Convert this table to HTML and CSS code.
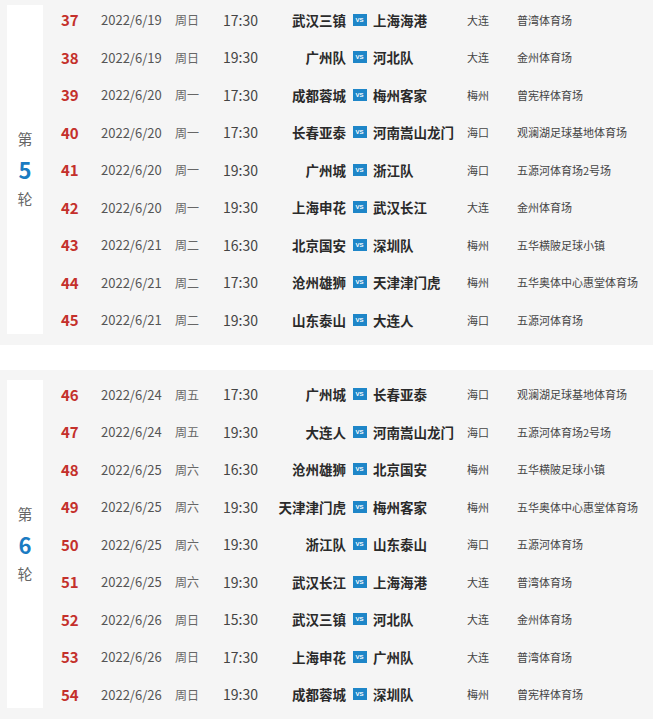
FILE: index.html
```html
<!DOCTYPE html>
<html lang="zh">
<head>
<meta charset="utf-8">
<link rel="stylesheet" href="styles.css">
</head>
<body>
<div class="wrap">
  <section class="panel">
    <div class="round"><span class="di">第</span><span class="rn">5</span><span class="di">轮</span></div>
    <div class="rows">
      <div class="row"><span class="num">37</span><span class="date">2022/6/19</span><span class="wk">周日</span><span class="tm">17:30</span><span class="home">武汉三镇</span><span class="vsc"><span class="vs">VS</span></span><span class="away">上海海港</span><span class="city">大连</span><span class="venue">普湾体育场</span></div>
      <div class="row"><span class="num">38</span><span class="date">2022/6/19</span><span class="wk">周日</span><span class="tm">19:30</span><span class="home">广州队</span><span class="vsc"><span class="vs">VS</span></span><span class="away">河北队</span><span class="city">大连</span><span class="venue">金州体育场</span></div>
      <div class="row"><span class="num">39</span><span class="date">2022/6/20</span><span class="wk">周一</span><span class="tm">17:30</span><span class="home">成都蓉城</span><span class="vsc"><span class="vs">VS</span></span><span class="away">梅州客家</span><span class="city">梅州</span><span class="venue">曾宪梓体育场</span></div>
      <div class="row"><span class="num">40</span><span class="date">2022/6/20</span><span class="wk">周一</span><span class="tm">17:30</span><span class="home">长春亚泰</span><span class="vsc"><span class="vs">VS</span></span><span class="away">河南嵩山龙门</span><span class="city">海口</span><span class="venue">观澜湖足球基地体育场</span></div>
      <div class="row"><span class="num">41</span><span class="date">2022/6/20</span><span class="wk">周一</span><span class="tm">19:30</span><span class="home">广州城</span><span class="vsc"><span class="vs">VS</span></span><span class="away">浙江队</span><span class="city">海口</span><span class="venue">五源河体育场2号场</span></div>
      <div class="row"><span class="num">42</span><span class="date">2022/6/20</span><span class="wk">周一</span><span class="tm">19:30</span><span class="home">上海申花</span><span class="vsc"><span class="vs">VS</span></span><span class="away">武汉长江</span><span class="city">大连</span><span class="venue">金州体育场</span></div>
      <div class="row"><span class="num">43</span><span class="date">2022/6/21</span><span class="wk">周二</span><span class="tm">16:30</span><span class="home">北京国安</span><span class="vsc"><span class="vs">VS</span></span><span class="away">深圳队</span><span class="city">梅州</span><span class="venue">五华横陂足球小镇</span></div>
      <div class="row"><span class="num">44</span><span class="date">2022/6/21</span><span class="wk">周二</span><span class="tm">17:30</span><span class="home">沧州雄狮</span><span class="vsc"><span class="vs">VS</span></span><span class="away">天津津门虎</span><span class="city">梅州</span><span class="venue">五华奥体中心惠堂体育场</span></div>
      <div class="row"><span class="num">45</span><span class="date">2022/6/21</span><span class="wk">周二</span><span class="tm">19:30</span><span class="home">山东泰山</span><span class="vsc"><span class="vs">VS</span></span><span class="away">大连人</span><span class="city">海口</span><span class="venue">五源河体育场</span></div>
    </div>
  </section>
  <section class="panel">
    <div class="round"><span class="di">第</span><span class="rn">6</span><span class="di">轮</span></div>
    <div class="rows">
      <div class="row"><span class="num">46</span><span class="date">2022/6/24</span><span class="wk">周五</span><span class="tm">17:30</span><span class="home">广州城</span><span class="vsc"><span class="vs">VS</span></span><span class="away">长春亚泰</span><span class="city">海口</span><span class="venue">观澜湖足球基地体育场</span></div>
      <div class="row"><span class="num">47</span><span class="date">2022/6/24</span><span class="wk">周五</span><span class="tm">19:30</span><span class="home">大连人</span><span class="vsc"><span class="vs">VS</span></span><span class="away">河南嵩山龙门</span><span class="city">海口</span><span class="venue">五源河体育场2号场</span></div>
      <div class="row"><span class="num">48</span><span class="date">2022/6/25</span><span class="wk">周六</span><span class="tm">16:30</span><span class="home">沧州雄狮</span><span class="vsc"><span class="vs">VS</span></span><span class="away">北京国安</span><span class="city">梅州</span><span class="venue">五华横陂足球小镇</span></div>
      <div class="row"><span class="num">49</span><span class="date">2022/6/25</span><span class="wk">周六</span><span class="tm">19:30</span><span class="home">天津津门虎</span><span class="vsc"><span class="vs">VS</span></span><span class="away">梅州客家</span><span class="city">梅州</span><span class="venue">五华奥体中心惠堂体育场</span></div>
      <div class="row"><span class="num">50</span><span class="date">2022/6/25</span><span class="wk">周六</span><span class="tm">19:30</span><span class="home">浙江队</span><span class="vsc"><span class="vs">VS</span></span><span class="away">山东泰山</span><span class="city">海口</span><span class="venue">五源河体育场</span></div>
      <div class="row"><span class="num">51</span><span class="date">2022/6/25</span><span class="wk">周六</span><span class="tm">19:30</span><span class="home">武汉长江</span><span class="vsc"><span class="vs">VS</span></span><span class="away">上海海港</span><span class="city">大连</span><span class="venue">普湾体育场</span></div>
      <div class="row"><span class="num">52</span><span class="date">2022/6/26</span><span class="wk">周日</span><span class="tm">15:30</span><span class="home">武汉三镇</span><span class="vsc"><span class="vs">VS</span></span><span class="away">河北队</span><span class="city">大连</span><span class="venue">金州体育场</span></div>
      <div class="row"><span class="num">53</span><span class="date">2022/6/26</span><span class="wk">周日</span><span class="tm">17:30</span><span class="home">上海申花</span><span class="vsc"><span class="vs">VS</span></span><span class="away">广州队</span><span class="city">大连</span><span class="venue">普湾体育场</span></div>
      <div class="row"><span class="num">54</span><span class="date">2022/6/26</span><span class="wk">周日</span><span class="tm">19:30</span><span class="home">成都蓉城</span><span class="vsc"><span class="vs">VS</span></span><span class="away">深圳队</span><span class="city">梅州</span><span class="venue">曾宪梓体育场</span></div>
    </div>
  </section>
</div>
</body>
</html>
```

FILE: styles.css
```css
html, body {
  margin: 0;
  padding: 0;
  background: #ffffff;
}
body {
  font-family: "Noto Sans CJK SC", "Noto Sans", sans-serif;
  color: #333;
  overflow: hidden;
}
.wrap {
  margin-top: -5px;
  width: 653px;
  display: flex;
  flex-direction: column;
  gap: 25px;
}
.panel {
  background: #f5f5f5;
  display: flex;
  padding: 6px 0;
}
.round {
  width: 36px;
  margin: 4px 0 5px 7px;
  background: #ffffff;
  display: flex;
  flex-direction: column;
  align-items: center;
  justify-content: center;
  gap: 1px;
}
.di {
  font-size: 15px;
  line-height: 28px;
  color: #666;
}
.rn {
  font-size: 22px;
  line-height: 30px;
  font-weight: 700;
  color: #1a7bc2;
}
.rows {
  flex: 1;
  display: flex;
  flex-direction: column;
}
.row {
  height: 37.5px;
  display: grid;
  grid-template-columns: 58px 74px 48px 50px 73px 27px 94px 50px 1fr;
  align-items: center;
  white-space: nowrap;
}
.num {
  padding-left: 18px;
  font-size: 15px;
  font-weight: 700;
  color: #c4302b;
}
.date {
  font-size: 13px;
  color: #555;
}
.wk {
  font-size: 12px;
  color: #666;
}
.tm {
  font-size: 14px;
  color: #444;
}
.home {
  text-align: right;
  font-size: 13.5px;
  font-weight: 700;
  color: #2a2a2a;
}
.away {
  font-size: 13.5px;
  font-weight: 700;
  color: #2a2a2a;
}
.vsc {
  display: flex;
  justify-content: center;
}
.vs {
  width: 14px;
  height: 12px;
  background: #1e86c8;
  color: #fff;
  font-family: "Liberation Sans", sans-serif;
  font-size: 6px;
  font-weight: 700;
  line-height: 12px;
  text-align: center;
}
.city {
  font-size: 11px;
  color: #444;
}
.venue {
  font-size: 11px;
  color: #444;
}
```
